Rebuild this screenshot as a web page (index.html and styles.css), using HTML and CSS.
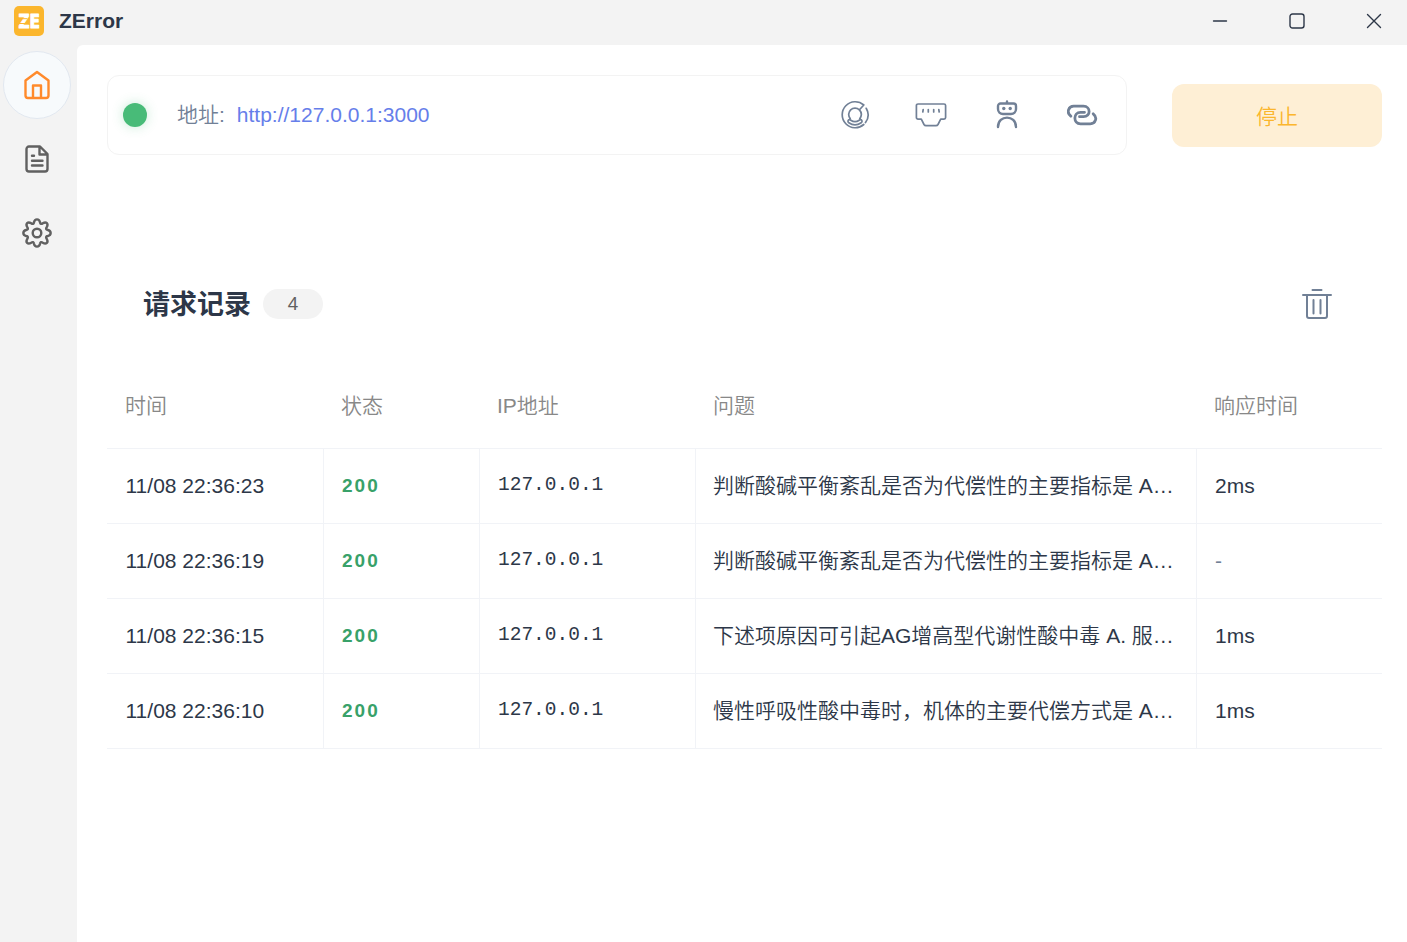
FILE: index.html
```html
<!DOCTYPE html>
<html lang="zh-CN">
<head>
    <meta charset="UTF-8">
    <meta name="viewport" content="width=device-width, initial-scale=1.0">
    <title>ZError</title>
    <link rel="stylesheet" href="styles.css">
</head>
<body>
    <!-- 标题栏 -->
    <header class="titlebar">
        <svg class="logo" viewBox="0 0 30 30">
            <rect width="30" height="30" rx="5" fill="#fbb62d"/>
            <text x="4.5" y="22" textLength="21.5" lengthAdjust="spacingAndGlyphs">ZE</text>
            <path d="M4 12.700h9M5 17.500h7" stroke="#fbb62d" stroke-width="1"/>
        </svg>
        <span class="app-name">ZError</span>
        <div class="window-btns">
            <button title="最小化"><svg viewBox="0 0 16 16"><path d="M1.5 8h13"/></svg></button>
            <button title="最大化"><svg viewBox="0 0 16 16"><rect x="1" y="1" width="14" height="14" rx="2.5"/></svg></button>
            <button title="关闭"><svg viewBox="0 0 16 16"><path d="M1.5 1.5l13 13M14.5 1.5l-13 13"/></svg></button>
        </div>
    </header>

    <div class="layout">
        <!-- 侧边栏 -->
        <nav class="sidebar">
            <a class="nav-item active">
                <svg viewBox="0 0 30 30"><path d="M3.500 10.500L15 2l11.500 8.500v15a2.500 2.500 0 0 1-2.500 2.500H6a2.500 2.500 0 0 1-2.500-2.500zM11 27.500V15.500h8v12"/></svg>
            </a>
            <a class="nav-item">
                <svg viewBox="0 0 30 30"><path d="M7 2.500h11l7.500 7.500v15a2.500 2.500 0 0 1-2.500 2.500H7A2.500 2.500 0 0 1 4.500 25V5A2.500 2.500 0 0 1 7 2.500zM17.500 3v7.500H25M10 11.800h2M10 16.800h10.500M10 21.500h10.500"/></svg>
            </a>
            <a class="nav-item">
                <svg viewBox="0 0 30 30"><circle cx="15" cy="15" r="4.300"/><path d="M12 4.200C12.800 .4 17.200 .4 18 4.200C18.300 6 19.300 6.400 20.800 5.300C24.300 3.200 26.800 5.700 24.700 9.200C23.600 10.700 24 11.700 25.800 12C29.600 12.800 29.600 17.200 25.800 18C24 18.300 23.600 19.300 24.700 20.800C26.800 24.300 24.300 26.800 20.800 24.700C19.300 23.600 18.300 24 18 25.800C17.200 29.600 12.800 29.600 12 25.800C11.700 24 10.700 23.600 9.200 24.700C5.700 26.800 3.200 24.300 5.300 20.800C6.400 19.300 6 18.300 4.200 18C.4 17.200 .4 12.800 4.200 12C6 11.700 6.400 10.700 5.300 9.200C3.200 5.700 5.700 3.200 9.200 5.300C10.700 6.400 11.700 6 12 4.200z"/></svg>
            </a>
        </nav>

        <main class="content">
            <div class="top-row">
                <section class="server-card">
                    <span class="status-dot"></span>
                    <span class="addr-label">地址:</span>
                    <a class="addr-link">http://127.0.0.1:3000</a>
                    <div class="tools">
                        <svg viewBox="0 0 32 32">
                            <path d="M24.800 6A13 13 0 1 0 24.800 25.500M27.200 9.300A13 13 0 0 1 26.500 23.600M24.800 6L20.500 10.700M11.200 19.500A6.300 6.300 0 1 1 20.800 19.500M20.500 10.700A7 7 0 0 1 21.500 18.500M9.800 20.800C8.600 21.600 8.800 23 9.800 23.700C13.500 26.300 18.500 26.300 22.200 23.700C23.200 23 23.400 21.600 22.200 20.800C20.500 20 20 22.700 16 22.700S11.500 20 9.800 20.800"/>
                        </svg>
                        <svg viewBox="0 0 32 32">
                            <path d="M3 5h26a1.600 1.600 0 0 1 1.600 1.600v12a1.600 1.600 0 0 1-1.600 1.600h-3.300l-2.700 5.300a2.300 2.300 0 0 1-2 1.200H11a2.300 2.300 0 0 1-2-1.200L6.300 20.200H3a1.600 1.600 0 0 1-1.600-1.600v-12A1.600 1.600 0 0 1 3 5zM8.200 10.500l-.4 2.500M13.300 10.500v2.500M18.700 10.500v2.500M23.800 10.500l.4 2.500"/>
                        </svg>
                        <svg class="bold" viewBox="0 0 32 32">
                            <path d="M9.500 4.500h13a2.500 2.500 0 0 1 2.500 2.500V10a5 5 0 0 1-5 5h-8a5 5 0 0 1-5-5V7a2.500 2.500 0 0 1 2.500-2.500zM16 2.500v1.500M7 28C7 15.500 25 15.500 25 28"/>
                            <circle class="eye" cx="12.800" cy="9.500" r="1.700"/><circle class="eye" cx="19.200" cy="9.500" r="1.700"/>
                        </svg>
                        <svg class="link" viewBox="0 0 32 32">
                            <path d="M3.800 17.200C-.9 13.500 1.500 7.200 6.700 7.200H16.500C24 7.200 24 17.700 16.500 17.700H12.500M26.200 14.800C30.900 18.500 28.500 24.800 23.300 24.800H13.500C6 24.800 6 13.300 13.500 13.300H17.500"/>
                        </svg>
                    </div>
                </section>
                <button class="stop-btn">停止</button>
            </div>

            <div class="records-head">
                <h2>请求记录</h2>
                <span class="count">4</span>
                <svg class="trash" viewBox="0 0 30 32"><path d="M10.500 2h9M1 7h28M5 7v21a2 2 0 0 0 2 2h16a2 2 0 0 0 2-2V7M11.500 12v13.500M18.500 12v13.500"/></svg>
            </div>

            <!-- 请求记录表格 -->
            <table>
                <colgroup><col class="c-time"><col class="c-status"><col class="c-ip"><col class="c-question"><col></colgroup>
                <thead>
                    <tr><th>时间</th><th>状态</th><th>IP地址</th><th>问题</th><th>响应时间</th></tr>
                </thead>
                <tbody>
                    <tr><td class="time">11/08 22:36:23</td><td class="status">200</td><td class="ip">127.0.0.1</td><td class="question">判断酸碱平衡紊乱是否为代偿性的主要指标是 A…</td><td>2ms</td></tr>
                    <tr><td class="time">11/08 22:36:19</td><td class="status">200</td><td class="ip">127.0.0.1</td><td class="question">判断酸碱平衡紊乱是否为代偿性的主要指标是 A…</td><td class="none">-</td></tr>
                    <tr><td class="time">11/08 22:36:15</td><td class="status">200</td><td class="ip">127.0.0.1</td><td class="question">下述项原因可引起AG增高型代谢性酸中毒 A. 服…</td><td>1ms</td></tr>
                    <tr><td class="time">11/08 22:36:10</td><td class="status">200</td><td class="ip">127.0.0.1</td><td class="question">慢性呼吸性酸中毒时，机体的主要代偿方式是 A…</td><td>1ms</td></tr>
                </tbody>
            </table>
        </main>
    </div>
</body>
</html>
```
FILE: styles.css
```css
* {
    box-sizing: border-box;
}
body {
    margin: 0;
    height: 100vh;
    display: flex;
    flex-direction: column;
    overflow: hidden;
    background-color: #f3f3f3;
    color: #2d3748;
    font-family: "Liberation Sans", "Noto Sans CJK SC", sans-serif;
    font-size: 21px;
}
svg {
    display: block;
    fill: none;
    stroke: currentColor;
    stroke-linecap: round;
    stroke-linejoin: round;
}
button {
    border: none;
    background: none;
    padding: 0;
    color: inherit;
    font: inherit;
}

/* 标题栏 */
.titlebar {
    flex: 0 0 45px;
    display: flex;
    align-items: center;
    padding: 0 14px 3px;
}
.logo {
    width: 30px;
    height: 30px;
    stroke: none;
}
.logo text {
    font-family: "DejaVu Sans", sans-serif;
    font-weight: bold;
    font-size: 19px;
    fill: #fff;
    stroke: #fff;
    stroke-width: 1;
}
.app-name {
    margin-left: 15px;
    font-weight: bold;
}
.window-btns {
    display: flex;
    margin-left: auto;
    margin-right: -19px;
}
.window-btns button {
    width: 77px;
    display: flex;
    justify-content: center;
}
.window-btns svg {
    width: 16px;
    height: 16px;
    stroke-width: 1.4;
}

.layout {
    flex: 1;
    display: flex;
    min-height: 0;
}

/* 侧边栏 */
.sidebar {
    width: 77px;
    padding: 6px 3px;
}
.nav-item {
    width: 68px;
    height: 68px;
    margin-bottom: 6px;
    border: 1px solid transparent;
    border-radius: 50%;
    display: flex;
    align-items: center;
    justify-content: center;
    color: #606060;
}
.nav-item.active {
    background-color: #f7fafc;
    border-color: #e2e8f0;
    color: #ff8a2b;
}
.nav-item svg {
    width: 30px;
    height: 30px;
    stroke-width: 2.4;
}

.content {
    flex: 1;
    min-width: 0;
    background-color: #fff;
    border-top-left-radius: 6px;
    padding: 30px 25px 0 30px;
}

/* 服务地址 */
.top-row {
    display: flex;
    align-items: center;
    justify-content: space-between;
}
.server-card {
    width: 1020px;
    height: 80px;
    border: 1px solid #f3f3f3;
    border-radius: 12px;
    display: flex;
    align-items: center;
    padding: 0 27px 0 15px;
}
.status-dot {
    width: 24px;
    height: 24px;
    border-radius: 50%;
    background-color: #48bb78;
    box-shadow: 0 0 12px rgba(72, 187, 120, 0.3);
}
.addr-label {
    margin-left: 30px;
    padding-bottom: 4px;
    color: #718096;
    font-weight: 350;
}
.addr-link {
    margin-left: 12px;
    color: #667eea;
}
.tools {
    display: flex;
    gap: 44px;
    margin-left: auto;
    color: #718096;
}
.tools svg {
    width: 32px;
    height: 32px;
    stroke-width: 1.7;
}
.tools .bold {
    stroke-width: 2.4;
}
.tools .eye {
    fill: currentColor;
    stroke: none;
}
.tools .link {
    stroke-width: 2.8;
}
.stop-btn {
    width: 210px;
    height: 63px;
    border-radius: 12px;
    background-color: #feefd5;
    color: #fbb62d;
    font-weight: 350;
}

/* 请求记录 */
.records-head {
    display: flex;
    align-items: center;
    height: 60px;
    margin-top: 119px;
    padding: 0 50px 0 36px;
}
.records-head h2 {
    margin: 0;
    padding-bottom: 3px;
    font-size: 27px;
}
.count {
    width: 60px;
    height: 30px;
    margin-left: 12px;
    border-radius: 15px;
    background-color: #f3f3f3;
    color: #606060;
    font-family: "Noto Sans", sans-serif;
    font-size: 18px;
    line-height: 29px;
    text-align: center;
}
.trash {
    width: 30px;
    height: 32px;
    margin-left: auto;
    color: #718096;
    stroke-width: 2;
}

table {
    width: 1275px;
    margin-top: 30px;
    table-layout: fixed;
    border-collapse: separate;
    border-spacing: 0;
}
.c-time {
    width: 217px;
}
.c-status {
    width: 156px;
}
.c-ip {
    width: 216px;
}
.c-question {
    width: 501px;
}
th,
td {
    padding: 0 18px;
    text-align: left;
    white-space: nowrap;
    overflow: hidden;
    border-bottom: 1px solid #f1f3f7;
}
th {
    height: 85px;
    padding: 0 17px 4px;
    color: #888;
    font-weight: 350;
}
th:first-child {
    padding-left: 18px;
}
td {
    height: 75px;
    border-right: 1px solid #f1f3f7;
}
td:last-child {
    border-right: none;
}
.time {
    padding-left: 18.5px;
}
.status {
    color: #38a169;
    font-size: 19px;
    font-weight: bold;
    letter-spacing: 2px;
}
.ip {
    padding-bottom: 2px;
    font-family: "Liberation Mono", monospace;
    font-size: 19.5px;
}
.question {
    padding: 0 17px 4px;
    font-weight: 350;
}
.none {
    color: #718096;
}
```
